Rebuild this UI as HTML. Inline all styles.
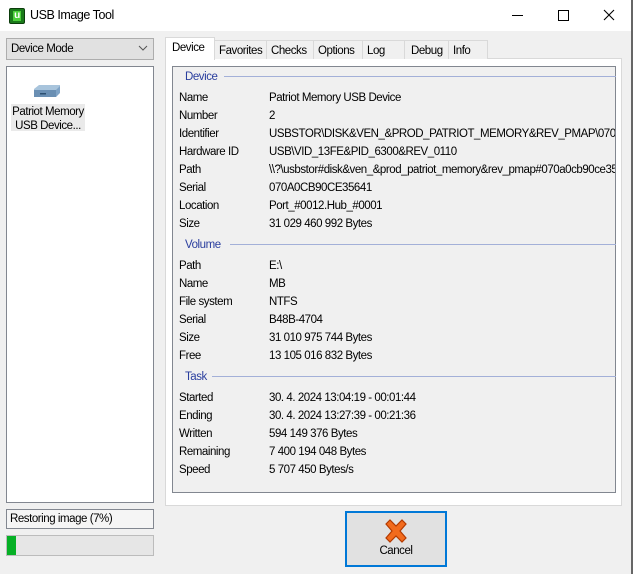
<!DOCTYPE html><html><head><style>
*{margin:0;padding:0;box-sizing:border-box}
body{width:633px;height:574px;background:#f0f0f0;font-family:"Liberation Sans",sans-serif;font-size:11.5px;letter-spacing:-0.45px;line-height:17px;color:#000;position:relative;overflow:hidden}
.a{position:absolute}
.title{left:0;top:0;width:633px;height:31px;background:#fff}
.tab{position:absolute;top:40px;height:19px;border:1px solid #d9d9d9;border-bottom:none;background:#f0f0f0;padding:2px 0 0 4px}
.lbl{position:absolute;left:179px;margin-top:1px}
.val{position:absolute;left:269px;white-space:nowrap;margin-top:1px}
.hd{position:absolute;left:185px;color:#2a3e9e;margin-top:1px}
.ln{position:absolute;height:1px;background:#a3b0d8;right:17px}
</style></head><body>
<div class="a title"></div>
<div class="a" style="left:9px;top:8px;width:16px;height:16px;background:#1a7a1a;border-radius:2px;border:1px solid #0b3c0b"><div style="position:absolute;left:3px;top:2px;width:8px;height:10px;background:#4ccf3a;color:#fff;font-size:10px;font-weight:bold;line-height:10px;text-align:center">u</div></div>
<div class="a" style="left:30px;top:8px;font-size:12.5px;line-height:normal">USB Image Tool</div>
<div class="a" style="left:512px;top:15px;width:11px;height:1px;background:#000"></div>
<div class="a" style="left:558px;top:10px;width:11px;height:11px;border:1px solid #000"></div>
<svg class="a" style="left:603px;top:9px" width="12" height="12"><path d="M1 1L11 11M11 1L1 11" stroke="#000" stroke-width="1.1"/></svg>
<div class="a" style="left:631px;top:0;width:2px;height:574px;background:#666"></div>
<div class="a" style="left:6px;top:38px;width:148px;height:22px;border:1px solid #adadad;background:#e1e1e1;padding:2px 0 0 4px">Device Mode</div>
<svg class="a" style="left:138px;top:45px" width="10" height="6"><path d="M1 1L5 5L9 1" stroke="#555" fill="none"/></svg>
<div class="a" style="left:6px;top:66px;width:148px;height:437px;background:#fff;border:1px solid #828790"></div>
<svg class="a" style="left:32px;top:84px" width="30" height="16"><path d="M2 5L7 1H28V8L24 13H2Z" fill="#a8c4dc"/><path d="M2 6H24V13H2Z" fill="#6a8fb3"/><path d="M24 6L28 2V9L24 13Z" fill="#7fa3c6"/><rect x="8" y="9" width="6" height="1.5" fill="#2c4f70"/></svg>
<div class="a" style="left:11px;top:104px;width:74px;height:27px;background:#eaeaea"></div>
<div class="a" style="left:12px;top:104px;width:72px;line-height:14px;padding-top:1px;text-align:center">Patriot Memory<br>USB Device...</div>
<div class="a" style="left:6px;top:509px;width:148px;height:20px;background:#f5f5f5;border:1px solid #828790;padding:1px 0 0 3px">Restoring image (7%)</div>
<div class="a" style="left:6px;top:535px;width:148px;height:21px;background:#e6e6e6;border:1px solid #bcbcbc"><div style="position:absolute;left:0;top:0;width:9px;height:19px;background:#06b025"></div></div>
<div class="a" style="left:165px;top:58px;width:457px;height:448px;background:#fff;border:1px solid #d9d9d9"></div>
<div class="tab" style="left:214px;width:53px">Favorites</div>
<div class="tab" style="left:266px;width:48px">Checks</div>
<div class="tab" style="left:313px;width:50px">Options</div>
<div class="tab" style="left:362px;width:43px">Log</div>
<div class="tab" style="left:404px;width:45px;padding-left:6px">Debug</div>
<div class="tab" style="left:448px;width:40px">Info</div>
<div class="tab" style="left:165px;top:37px;width:50px;height:23px;background:#fff;padding:2px 0 0 6px">Device</div>
<div class="a" style="left:172px;top:66px;width:444px;height:427px;background:#f0f0f0;border:1px solid #828790"></div>
<div class="hd" style="top:68px">Device</div><div class="ln" style="left:224px;top:76px"></div>
<div class="hd" style="top:236px">Volume</div><div class="ln" style="left:230px;top:244px"></div>
<div class="hd" style="top:368px">Task</div><div class="ln" style="left:212px;top:376px"></div>
<div style="position:absolute;left:0;top:0;width:615px;height:574px;overflow:hidden">
<div class="lbl" style="top:89px">Name</div><div class="val" style="top:89px">Patriot Memory USB Device</div>
<div class="lbl" style="top:107px">Number</div><div class="val" style="top:107px">2</div>
<div class="lbl" style="top:125px">Identifier</div><div class="val" style="top:125px">USBSTOR\DISK&amp;VEN_&amp;PROD_PATRIOT_MEMORY&amp;REV_PMAP\070A0CB9</div>
<div class="lbl" style="top:143px">Hardware ID</div><div class="val" style="top:143px">USB\VID_13FE&amp;PID_6300&amp;REV_0110</div>
<div class="lbl" style="top:161px">Path</div><div class="val" style="top:161px">\\?\usbstor#disk&amp;ven_&amp;prod_patriot_memory&amp;rev_pmap#070a0cb90ce35641</div>
<div class="lbl" style="top:179px">Serial</div><div class="val" style="top:179px">070A0CB90CE35641</div>
<div class="lbl" style="top:197px">Location</div><div class="val" style="top:197px">Port_#0012.Hub_#0001</div>
<div class="lbl" style="top:215px">Size</div><div class="val" style="top:215px">31 029 460 992 Bytes</div>
<div class="lbl" style="top:257px">Path</div><div class="val" style="top:257px">E:\</div>
<div class="lbl" style="top:275px">Name</div><div class="val" style="top:275px">MB</div>
<div class="lbl" style="top:293px">File system</div><div class="val" style="top:293px">NTFS</div>
<div class="lbl" style="top:311px">Serial</div><div class="val" style="top:311px">B48B-4704</div>
<div class="lbl" style="top:329px">Size</div><div class="val" style="top:329px">31 010 975 744 Bytes</div>
<div class="lbl" style="top:347px">Free</div><div class="val" style="top:347px">13 105 016 832 Bytes</div>
<div class="lbl" style="top:389px">Started</div><div class="val" style="top:389px">30. 4. 2024 13:04:19 - 00:01:44</div>
<div class="lbl" style="top:407px">Ending</div><div class="val" style="top:407px">30. 4. 2024 13:27:39 - 00:21:36</div>
<div class="lbl" style="top:425px">Written</div><div class="val" style="top:425px">594 149 376 Bytes</div>
<div class="lbl" style="top:443px">Remaining</div><div class="val" style="top:443px">7 400 194 048 Bytes</div>
<div class="lbl" style="top:461px">Speed</div><div class="val" style="top:461px">5 707 450 Bytes/s</div>
</div>
<div class="a" style="left:345px;top:511px;width:102px;height:56px;border:2px solid #0078d7;background:#e1e1e1"></div>
<svg class="a" style="left:383px;top:519px" width="26" height="24"><path d="M3 5L7 1L13 7L19 1L23 5L17 12L23 19L19 23L13 17L7 23L3 19L9 12Z" fill="#f26b1d" stroke="#b33a00" stroke-width="1.2"/></svg>
<div class="a" style="left:345px;top:543px;width:102px;text-align:center">Cancel</div>
</body></html>
